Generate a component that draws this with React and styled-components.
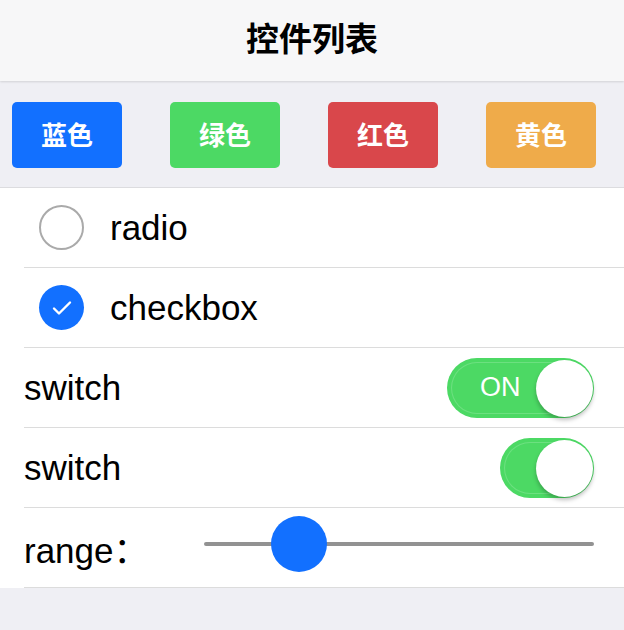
import React, { useState } from 'react';
import styled, { createGlobalStyle } from 'styled-components';

const GlobalStyle = createGlobalStyle`
  html, body {
    margin: 0;
    padding: 0;
    background: #efeff4;
    font-family: "Liberation Sans", "Noto Sans CJK SC", sans-serif;
  }
`;

const colors = {
  blue: '#1270ff',
  green: '#4cd964',
  red: '#d9474b',
  yellow: '#efab4a',
};

const Page = styled.div`
  width: 624px;
  min-height: 630px;
  background: #efeff4;
`;

const Header = styled.header`
  height: 81px;
  box-sizing: border-box;
  padding-bottom: 8px;
  display: flex;
  align-items: center;
  justify-content: center;
  background: #f7f7f8;
  box-shadow: 0 1px 2px rgba(0, 0, 0, 0.12);
  position: relative;
  z-index: 1;
`;

const Title = styled.h1`
  margin: 0;
  font-size: 33px;
  font-weight: bold;
  color: #000;
`;

const Toolbar = styled.div`
  display: flex;
  gap: 48px;
  padding: 21px 12px 19px;
  border-bottom: 1px solid #dcdcdf;
`;

const ColorButton = styled.button`
  width: 110px;
  height: 66px;
  padding: 0 0 4px;
  border: none;
  border-radius: 5px;
  background: ${({ tone }) => colors[tone]};
  color: #fff;
  font-family: inherit;
  font-size: 26px;
  font-weight: bold;
  cursor: pointer;
`;

const List = styled.div`
  background: #fff;
`;

const Row = styled.label`
  display: flex;
  align-items: center;
  height: 79px;
  margin-left: 24px;
  padding-left: ${({ indent }) => (indent ? '15px' : '0')};
  padding-right: 30px;
  border-bottom: 1px solid #dcdcdc;
  font-size: 35px;
  color: #000;
`;

const Label = styled.span`
  flex: 1;
`;

const Mark = styled.span`
  width: 45px;
  height: 45px;
  border-radius: 50%;
  box-sizing: border-box;
  margin-right: 26px;
  display: flex;
  align-items: center;
  justify-content: center;
  border: ${({ on }) => (on ? 'none' : '2px solid #aaaaaa')};
  background: ${({ on }) => (on ? colors.blue : '#fff')};
`;

const Toggle = styled.span`
  position: relative;
  display: flex;
  align-items: center;
  width: ${({ wide }) => (wide ? '147px' : '94px')};
  height: 60px;
  border-radius: 30px;
  background: ${colors.green};

  &::before {
    content: '';
    position: absolute;
    inset: 4px 40px 4px 4px;
    border: 1px solid rgba(255, 255, 255, 0.18);
    border-right: none;
    border-radius: 26px 0 0 26px;
  }
`;

const ToggleText = styled.span`
  color: #fff;
  font-size: 27px;
  margin-left: 33px;
`;

const Knob = styled.span`
  position: absolute;
  right: 1px;
  top: 2px;
  width: 57px;
  height: 57px;
  border-radius: 50%;
  background: #fff;
  box-shadow: 0 3px 4px rgba(0, 0, 0, 0.25);
`;

const RangeLabel = styled.span`
  width: 180px;
`;

const Slider = styled.input`
  flex: 1;
  margin: 0 0 8px;
  height: 56px;
  background: transparent;
  -webkit-appearance: none;
  appearance: none;

  &::-webkit-slider-runnable-track {
    height: 4px;
    border-radius: 2px;
    background: #929292;
  }

  &::-webkit-slider-thumb {
    -webkit-appearance: none;
    width: 56px;
    height: 56px;
    margin-top: -26px;
    border-radius: 50%;
    background: ${colors.blue};
    border: none;
  }
`;

function Switch({ wide }) {
  return (
    <Toggle wide={wide}>
      {wide && <ToggleText>ON</ToggleText>}
      <Knob />
    </Toggle>
  );
}

export default function App() {
  const [range, setRange] = useState(20);

  return (
    <Page>
      <GlobalStyle />
      <Header>
        <Title>控件列表</Title>
      </Header>
      <Toolbar>
        <ColorButton tone="blue">蓝色</ColorButton>
        <ColorButton tone="green">绿色</ColorButton>
        <ColorButton tone="red">红色</ColorButton>
        <ColorButton tone="yellow">黄色</ColorButton>
      </Toolbar>
      <List>
        <Row indent>
          <Mark />
          <Label>radio</Label>
        </Row>
        <Row indent>
          <Mark on>
            <svg width="20" height="16" viewBox="0 0 20 16">
              <path d="M2 8.5l5 5L18 2.5" fill="none" stroke="#fff" strokeWidth="2.4" strokeLinecap="round" strokeLinejoin="round" />
            </svg>
          </Mark>
          <Label>checkbox</Label>
        </Row>
        <Row>
          <Label>switch</Label>
          <Switch wide />
        </Row>
        <Row>
          <Label>switch</Label>
          <Switch />
        </Row>
        <Row>
          <RangeLabel>range：</RangeLabel>
          <Slider
            type="range"
            min="0"
            max="100"
            value={range}
            onChange={(e) => setRange(Number(e.target.value))}
          />
        </Row>
      </List>
    </Page>
  );
}
